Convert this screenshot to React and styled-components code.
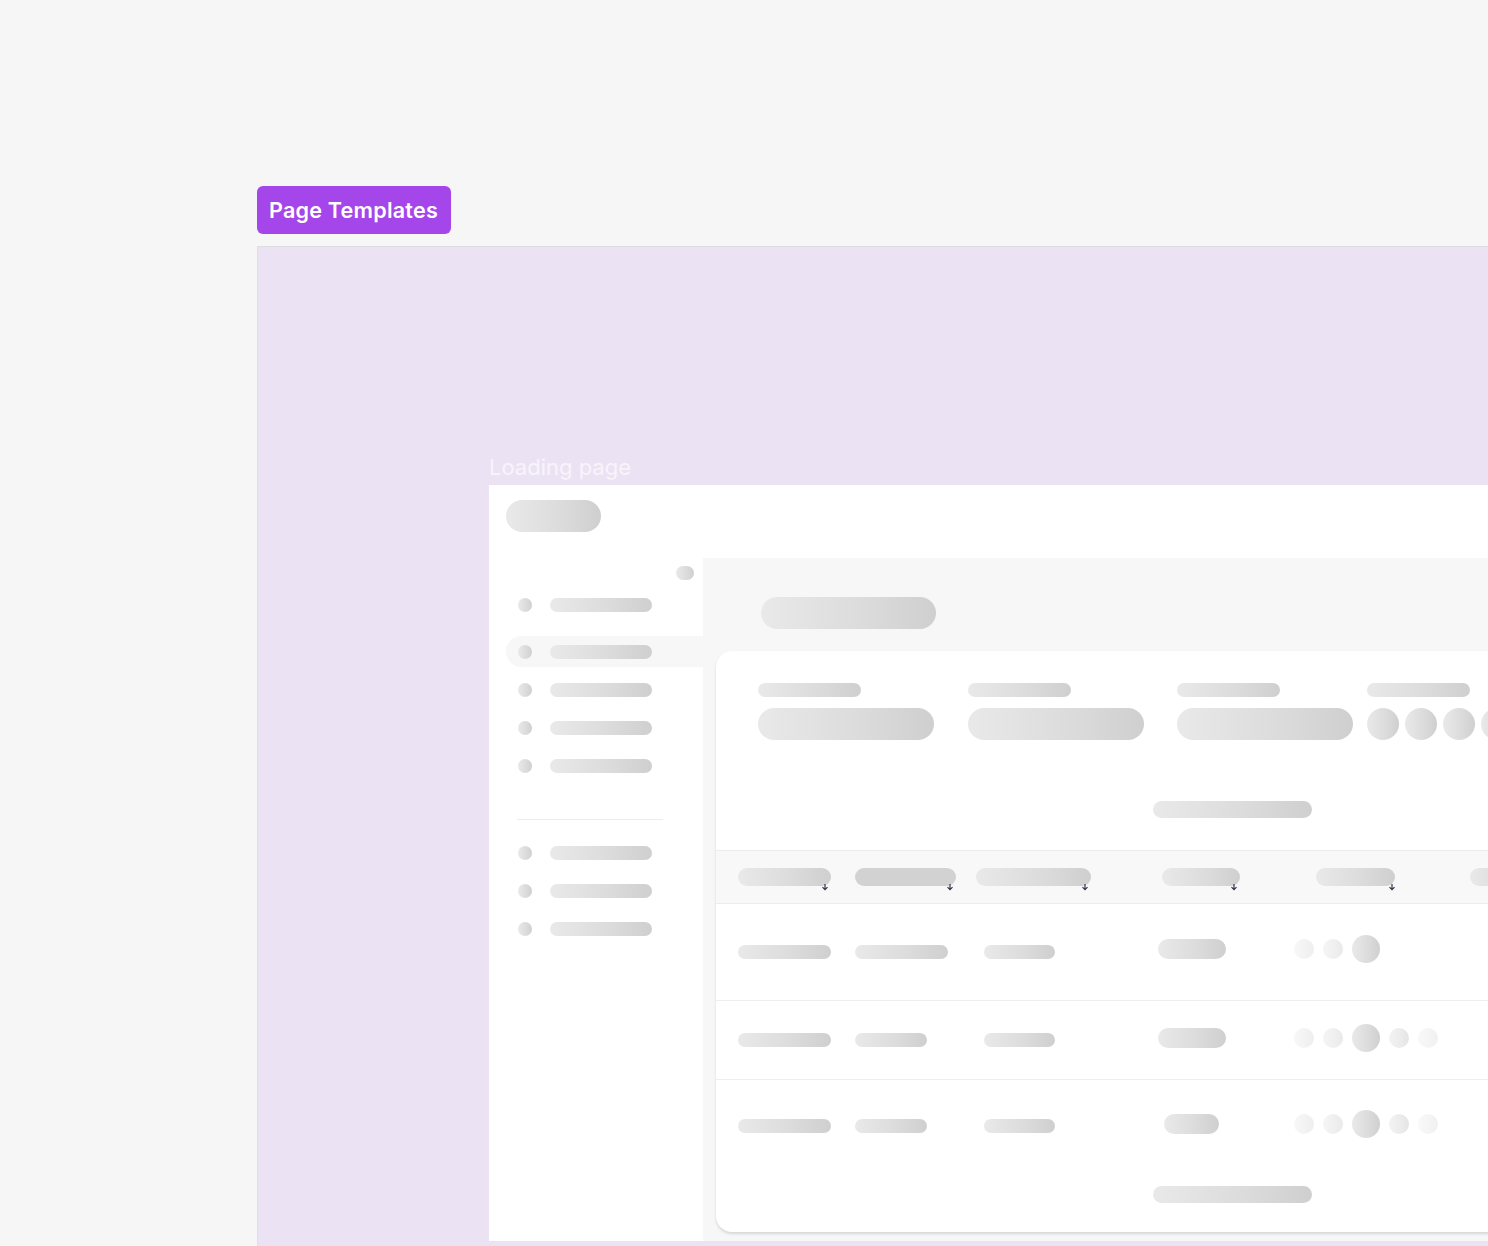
import React from 'react';
import styled, { createGlobalStyle } from 'styled-components';

const Global = createGlobalStyle`
  html, body {
    margin: 0;
    padding: 0;
    background: #f6f6f6;
    font-family: 'Inter', 'Liberation Sans', sans-serif;
  }
  body {
    height: 1246px;
    overflow: hidden;
  }
`;

const skeleton = `
  background: linear-gradient(90deg, #e9e9e9 0%, #dbdbdb 60%, #cfcfcf 100%);
`;

// CANVAS --- CANVAS --- CANVAS ---
const Canvas = styled.div`
  width: 1488px;
  height: 1246px;
  overflow: hidden;
  padding: 186px 0 0 257px;
  box-sizing: border-box;
  display: flex;
  flex-direction: column;
  align-items: flex-start;
`;

const Badge = styled.div`
  height: 48px;
  flex-shrink: 0;
  padding: 0 13px 0 12px;
  box-sizing: border-box;
  display: flex;
  align-items: center;
  background: #a446e9;
  color: #fff;
  border-radius: 6px;
  font-size: 21.6px;
  font-weight: 600;
  letter-spacing: 0.2px;
`;

const Panel = styled.section`
  margin-top: 12px;
  width: 1400px;
  height: 1100px;
  flex-shrink: 0;
  background: #ebe3f3;
  border-top: 1px solid #dedce0;
  border-left: 1px solid #e2dde8;
  box-sizing: border-box;
  padding: 207px 0 0 231px;
`;

const FrameLabel = styled.div`
  font-size: 22px;
  line-height: 26px;
  color: #f8f4fb;
  font-weight: 400;
  margin-bottom: 5px;
`;

// FRAME --- FRAME --- FRAME ---
const Frame = styled.div`
  width: 1300px;
  height: 756px;
  background: #fff;
  display: flex;
  flex-direction: column;
`;

const TopBar = styled.div`
  height: 73px;
  padding: 15px 0 0 17px;
  box-sizing: border-box;
`;

const Bar = styled.div`
  ${skeleton}
  width: ${p => p.$w}px;
  height: ${p => p.$h || 14}px;
  border-radius: ${p => (p.$h || 14) / 2}px;
  flex-shrink: 0;
  opacity: ${p => p.$o || 1};
`;

const SolidBar = styled(Bar)`
  background: #d2d2d2;
`;

const Dot = styled.div`
  ${skeleton}
  width: ${p => p.$s || 14}px;
  height: ${p => p.$s || 14}px;
  border-radius: 50%;
  flex-shrink: 0;
  opacity: ${p => p.$o || 1};
`;

const Body = styled.div`
  flex: 1;
  display: flex;
`;

// SIDEBAR --- SIDEBAR --- SIDEBAR ---
const Sidebar = styled.nav`
  width: 214px;
  flex-shrink: 0;
  padding: 8px 0 0 17px;
  box-sizing: border-box;
  display: flex;
  flex-direction: column;
`;

const Collapse = styled.div`
  ${skeleton}
  align-self: flex-end;
  margin-right: 9px;
  width: 18px;
  height: 14px;
  border-radius: 7px;
  margin-bottom: 9px;
`;

const NavGroup = styled.div`
  display: flex;
  flex-direction: column;
  gap: 7px;
`;

const NavItem = styled.div`
  height: 31px;
  display: flex;
  align-items: center;
  gap: 18px;
  padding-left: 12px;
  border-radius: 16px 0 0 16px;
  background: ${p => (p.$active ? '#f7f7f7' : 'transparent')};
  margin-bottom: ${p => (p.$first ? 9 : 0)}px;
`;

const Divider = styled.hr`
  border: none;
  border-top: 1.5px solid #ececec;
  width: 146px;
  margin: 38px 0 17px 11px;
`;

// MAIN --- MAIN --- MAIN ---
const Main = styled.main`
  flex: 1;
  background: #f7f7f7;
  padding: 39px 0 0 13px;
  box-sizing: border-box;
  display: flex;
  flex-direction: column;
`;

const PageTitle = styled(Bar)`
  margin-left: 45px;
  margin-bottom: 22px;
`;

const Card = styled.div`
  width: 1032px;
  height: 581px;
  background: #fff;
  border-radius: 16px;
  box-shadow: 0 2px 3px rgba(0, 0, 0, 0.13);
  display: flex;
  flex-direction: column;
  overflow: hidden;
`;

const Stats = styled.div`
  display: flex;
  gap: 33.5px;
  padding: 32px 0 0 42px;
`;

const Stat = styled.div`
  display: flex;
  flex-direction: column;
  gap: 11px;
  margin-left: ${p => p.$ml || 0}px;
`;

const Avatars = styled.div`
  display: flex;
  gap: 6px;
`;

const Centered = styled.div`
  display: flex;
  justify-content: center;
  margin-top: ${p => p.$mt}px;
`;

// TABLE --- TABLE --- TABLE ---
const Table = styled.div`
  margin-top: 32px;
  display: flex;
  flex-direction: column;
`;

const columns = '117px 121px 174px 132px 176px 1fr';

const HeadRow = styled.div`
  display: grid;
  grid-template-columns: ${columns};
  align-items: center;
  height: 54px;
  padding-left: 22px;
  background: #f8f8f8;
  border-top: 1px solid #ececec;
  border-bottom: 1px solid #ececec;
  box-sizing: border-box;
`;

const Row = styled.div`
  display: grid;
  grid-template-columns: ${columns};
  align-items: center;
  height: ${p => p.$h}px;
  padding-left: 22px;
  box-sizing: border-box;
  border-bottom: ${p => (p.$last ? 'none' : '1.5px solid #efefef')};
`;

const Cell = styled.div`
  display: flex;
  align-items: center;
  gap: 9px;
  padding-left: ${p => p.$pl || 0}px;
  position: relative;
  margin-top: ${p => p.$dy || 0}px;
`;

const SortIcon = styled.svg`
  position: absolute;
  bottom: -5px;
  width: 8px;
  height: 8px;
`;

const Sortable = ({ w, pl, solid, arrow = 10 }) => {
  const Pill = solid ? SolidBar : Bar;
  return (
    <Cell $pl={pl}>
      <Pill $w={w} $h={18} />
      <SortIcon viewBox="0 0 8 8" style={{ left: (pl || 0) + w - arrow }}>
        <path d="M4 1v5.5M1.5 4.2 4 6.7l2.5-2.5" fill="none" stroke="#3a3148" strokeWidth="1.2" />
      </SortIcon>
    </Cell>
  );
};

const rows = [
  { h: 97, w2: 93, badge: 68, badgeOff: 0, dots: [0.35, 0.45, 1], dy: -6 },
  { h: 79, w2: 72, badge: 68, badgeOff: 0, dots: [0.35, 0.45, 1, 0.55, 0.3], dy: -4 },
  { h: 91, w2: 72, badge: 55, badgeOff: 6, dots: [0.35, 0.45, 1, 0.55, 0.3], dy: -3, last: true },
];

export default function App() {
  return (
    <Canvas>
      <Global />
      <Badge>Page Templates</Badge>
      <Panel>
        <FrameLabel>Loading page</FrameLabel>
        <Frame>
          <TopBar>
            <Bar $w={95} $h={32} />
          </TopBar>
          <Body>
            <Sidebar>
              <Collapse />
              <NavGroup>
                <NavItem $first><Dot /><Bar $w={102} /></NavItem>
                <NavItem $active><Dot /><Bar $w={102} /></NavItem>
                <NavItem><Dot /><Bar $w={102} /></NavItem>
                <NavItem><Dot /><Bar $w={102} /></NavItem>
                <NavItem><Dot /><Bar $w={102} /></NavItem>
              </NavGroup>
              <Divider />
              <NavGroup>
                <NavItem><Dot /><Bar $w={102} /></NavItem>
                <NavItem><Dot /><Bar $w={102} /></NavItem>
                <NavItem><Dot /><Bar $w={102} /></NavItem>
              </NavGroup>
            </Sidebar>
            <Main>
              <PageTitle $w={175} $h={32} />
              <Card>
                <Stats>
                  <Stat><Bar $w={103} /><Bar $w={176} $h={32} /></Stat>
                  <Stat><Bar $w={103} /><Bar $w={176} $h={32} /></Stat>
                  <Stat><Bar $w={103} /><Bar $w={176} $h={32} /></Stat>
                  <Stat $ml={-19.5}>
                    <Bar $w={103} />
                    <Avatars>
                      <Dot $s={32} /><Dot $s={32} /><Dot $s={32} /><Dot $s={32} />
                    </Avatars>
                  </Stat>
                </Stats>
                <Centered $mt={61}>
                  <Bar $w={159} $h={17} />
                </Centered>
                <Table>
                  <HeadRow>
                    <Sortable w={93} />
                    <Sortable w={101} solid />
                    <Sortable w={115} />
                    <Sortable w={78} pl={12} />
                    <Sortable w={79} pl={34} arrow={7} />
                    <Cell $pl={12}><Bar $w={60} $h={18} /></Cell>
                  </HeadRow>
                  {rows.map((r, i) => (
                    <Row key={i} $h={r.h} $last={r.last}>
                      <Cell><Bar $w={93} /></Cell>
                      <Cell><Bar $w={r.w2} /></Cell>
                      <Cell $pl={8}><Bar $w={71} /></Cell>
                      <Cell $pl={8 + r.badgeOff} $dy={r.dy}><Bar $w={r.badge} $h={20} /></Cell>
                      <Cell $pl={12} $dy={r.dy}>
                        {r.dots.map((o, j) => (
                          <Dot key={j} $s={o === 1 ? 28 : 20} $o={o} />
                        ))}
                      </Cell>
                      <Cell />
                    </Row>
                  ))}
                </Table>
                <Centered $mt={15}>
                  <Bar $w={159} $h={17} />
                </Centered>
              </Card>
            </Main>
          </Body>
        </Frame>
      </Panel>
    </Canvas>
  );
}
